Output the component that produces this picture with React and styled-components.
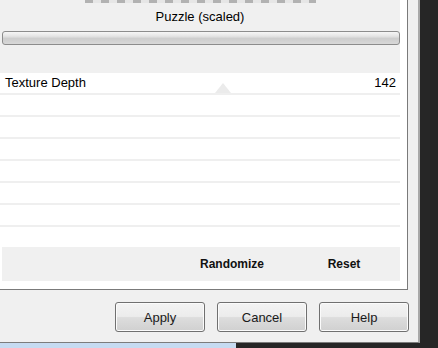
import React from "react";
import styled, { createGlobalStyle } from "styled-components";

const GlobalStyle = createGlobalStyle`
  html, body {
    margin: 0;
    padding: 0;
    background: #262626;
  }
  * {
    box-sizing: border-box;
  }
`;

const Screen = styled.div`
  width: 438px;
  height: 348px;
  background: #262626;
  display: flex;
  flex-direction: column;
  overflow: hidden;
  font-family: "Liberation Sans", Arial, sans-serif;
`;

const Dialog = styled.div`
  width: 420px;
  height: 343px;
  background: #f0f0f0;
  border-right: 2px solid #a9a9a9;
  border-bottom: 1px solid #7c7c7c;
  display: flex;
  flex-direction: column;
`;

const Panel = styled.div`
  width: 408px;
  height: 290px;
  background: #ffffff;
  border-right: 1px solid #7a7a7a;
  border-bottom: 1px solid #7a7a7a;
  padding-right: 7px;
  display: flex;
  flex-direction: column;
`;

const Header = styled.div`
  height: 73px;
  background: #f0f0f0;
  display: flex;
  flex-direction: column;
`;

const Dashes = styled.div`
  margin-left: 85px;
  width: 231px;
  height: 3px;
  background: repeating-linear-gradient(
    to right,
    #b2b2b2 0,
    #b2b2b2 8px,
    #e6e6e6 8px,
    #e6e6e6 16px
  );
`;

const Title = styled.div`
  height: 28px;
  display: flex;
  align-items: center;
  justify-content: center;
  font-size: 13px;
  color: #000;
  padding-bottom: 1px;
`;

const Track = styled.div`
  margin-left: 2px;
  height: 14px;
  border: 1px solid #8c8c8c;
  border-radius: 3px;
  background: linear-gradient(
    to bottom,
    #f6f6f6 0%,
    #e4e4e4 35%,
    #cdcdcd 55%,
    #d8d8d8 100%
  );
`;

const PropRow = styled.div`
  position: relative;
  height: 22px;
  border-bottom: 2px solid #efefef;
  display: flex;
  align-items: center;
  justify-content: space-between;
  padding: 0 4px 1px 5px;
  font-size: 13px;
  color: #000;
`;

const Marker = styled.div`
  position: absolute;
  left: 215px;
  bottom: 0;
  width: 0;
  height: 0;
  border-left: 8px solid transparent;
  border-right: 8px solid transparent;
  border-bottom: 10px solid #ebebeb;
`;

const Spacer = styled.div`
  height: 20px;
`;

const Footer = styled.div`
  margin-left: 2px;
  height: 34px;
  background: #f0f0f0;
  display: flex;
  justify-content: flex-end;
`;

const FooterCell = styled.div`
  width: 112px;
  display: flex;
  align-items: center;
  justify-content: center;
  font-size: 12px;
  font-weight: bold;
  color: #111;
`;

const ButtonBar = styled.div`
  display: flex;
  justify-content: flex-end;
  gap: 12px;
  padding: 12px 9px 0 0;
`;

const Button = styled.button`
  width: 90px;
  height: 30px;
  border: 1px solid #707070;
  border-radius: 3px;
  box-shadow: inset 0 0 0 1px #fbfbfb;
  background: linear-gradient(
    to bottom,
    #f3f3f3 0%,
    #ececec 48%,
    #dddddd 52%,
    #d0d0d0 100%
  );
  font-family: "Liberation Sans", Arial, sans-serif;
  font-size: 13px;
  color: #1a1a1a;
  padding: 0;
`;

const BottomStrip = styled.div`
  height: 5px;
  display: flex;
`;

const TaskbarPiece = styled.div`
  width: 236px;
  background: #c6dbf1;
`;

const rows = 6;

export default function App() {
  return (
    <Screen>
      <GlobalStyle />
      <Dialog>
        <Panel>
          <Header>
            <Dashes />
            <Title>Puzzle (scaled)</Title>
            <Track />
          </Header>
          <PropRow>
            <span>Texture Depth</span>
            <span>142</span>
            <Marker />
          </PropRow>
          {Array.from({ length: rows }).map((_, i) => (
            <PropRow key={i} />
          ))}
          <Spacer />
          <Footer>
            <FooterCell>Randomize</FooterCell>
            <FooterCell>Reset</FooterCell>
          </Footer>
        </Panel>
        <ButtonBar>
          <Button>Apply</Button>
          <Button>Cancel</Button>
          <Button>Help</Button>
        </ButtonBar>
      </Dialog>
      <BottomStrip>
        <TaskbarPiece />
      </BottomStrip>
    </Screen>
  );
}
